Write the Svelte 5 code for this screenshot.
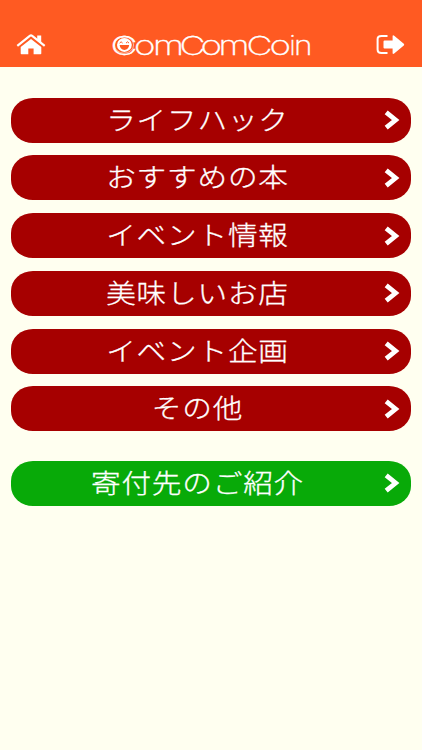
<script lang="ts">
  type MenuItem = { label: string; donation?: boolean };

  const items: MenuItem[] = [
    { label: "ライフハック" },
    { label: "おすすめの本" },
    { label: "イベント情報" },
    { label: "美味しいお店" },
    { label: "イベント企画" },
    { label: "その他" },
    { label: "寄付先のご紹介", donation: true },
  ];

  /** Letters of the wordmark, each stretched to its own width. */
  const letters = [
    { char: "C", x: 1.5, width: 27 },
    { char: "o", x: 25, width: 21.5 },
    { char: "m", x: 44, width: 31 },
    { char: "C", x: 70.5, width: 26 },
    { char: "o", x: 91.5, width: 21.5 },
    { char: "m", x: 109.5, width: 31 },
    { char: "C", x: 137.5, width: 26 },
    { char: "o", x: 160.5, width: 21.5 },
    { char: "i", x: 180.5, width: 6 },
    { char: "n", x: 185, width: 18.5 },
  ];
</script>

<div class="screen">
  <header class="header">
    <button class="icon-button" type="button" aria-label="Home">
      <svg width="30" height="22" viewBox="0 0 30 22">
        <path d="M15 5 4.7 13V19.5Q4.7 20.2 5.5 20.2H12.3V14.5H17.6V20.2H24.4Q25.3 20.2 25.3 19.5V13Z" fill="#fff" />
        <path d="M1.3 11.8 13.8 1.9Q15 1 16.2 1.9L28.7 11.8" fill="none" stroke="#fff" stroke-width="2.2" />
        <path d="M21.2 1.5H25.2V9L21.2 6Z" fill="#fff" />
      </svg>
    </button>

    <svg class="logo" width="204" height="44" viewBox="0 0 204 44" role="img" aria-label="ComComCoin">
      {#each letters as letter}
        <text x={letter.x} y="31.8" textLength={letter.width} lengthAdjust="spacingAndGlyphs">{letter.char}</text>
      {/each}
      <!-- smiling face inside the first letter -->
      <ellipse cx="15" cy="22" rx="9.6" ry="8.2" fill="none" stroke="#fff" stroke-width="0.8" opacity="0.7" />
      <ellipse cx="15.4" cy="21.9" rx="7.4" ry="7" fill="#fff" />
      <path d="M10.6 20.1Q12.1 17.5 13.6 20.1M17 20.1Q18.5 17.5 20 20.1" fill="none" stroke="#ff5a22" stroke-width="1" />
      <path d="M10.6 22.1H20.2Q19.6 26.9 15.4 26.9T10.6 22.1Z" fill="#ff5a22" />
    </svg>

    <button class="icon-button" type="button" aria-label="Logout">
      <svg width="30" height="22" viewBox="0 0 30 22">
        <path d="M11.5 2H5.5Q1.6 2 1.6 5V15.5Q1.6 19 5.5 19H11.5" fill="none" stroke="#fff" stroke-width="2" />
        <path d="M8.5 6.6H16.6V2.3Q16.6 .6 18.2 1.7L27.8 9.7Q28.7 10.6 27.8 11.4L18.2 19.5Q16.6 20.6 16.6 19V14.6H8.5Q7.5 14.6 7.5 13.6V7.6Q7.5 6.6 8.5 6.6Z" fill="#fff" />
      </svg>
    </button>
  </header>

  <nav class="menu">
    {#each items as item}
      <button class="menu-item" class:donation={item.donation} type="button">
        <span class="label">{item.label}</span>
        <svg class="chevron" width="16" height="20" viewBox="0 0 16 20">
          <path d="M2.2 2.4 11.6 10 2.2 17.6" fill="none" stroke="#fff" stroke-width="4.8" />
        </svg>
      </button>
    {/each}
  </nav>
</div>

<style>
  :global(body) {
    margin: 0;
    background: #fffff0;
  }

  .screen {
    min-height: 750px;
    background: #fffff0;
    font-family: "Noto Sans CJK JP", sans-serif;
  }

  .header {
    box-sizing: border-box;
    height: 67px;
    padding: 22px 16px 0;
    display: flex;
    align-items: center;
    justify-content: space-between;
    background: #ff5a22;
  }

  .icon-button {
    display: flex;
    padding: 0;
    border: 0;
    background: none;
    cursor: pointer;
  }

  .logo {
    overflow: visible;
  }

  .logo text {
    font-family: Inter, sans-serif;
    font-size: 26.5px;
    font-weight: 200;
    fill: #fff;
    stroke: #fff;
    stroke-width: 0.3px;
  }

  .menu {
    display: flex;
    flex-direction: column;
    gap: 12.8px;
    padding: 30.5px 11px 0 10.5px;
  }

  .menu-item {
    display: grid;
    grid-template-columns: 1fr 16px;
    align-items: center;
    height: 45px;
    padding: 0 11.5px 0 0;
    border: 0;
    border-radius: 22px / 20px;
    background: #a60000;
    color: #fff;
    font-family: inherit;
    cursor: pointer;
  }

  .donation {
    margin-top: 16.5px;
    background: #08aa08;
  }

  .label {
    padding-bottom: 3px;
    font-size: 26px;
    font-weight: 300;
    line-height: 42px;
    letter-spacing: 0.7px;
    white-space: nowrap;
    transform: scaleX(1.14);
    -webkit-text-stroke: 0.3px #fff;
  }

  .chevron {
    display: block;
  }
</style>
